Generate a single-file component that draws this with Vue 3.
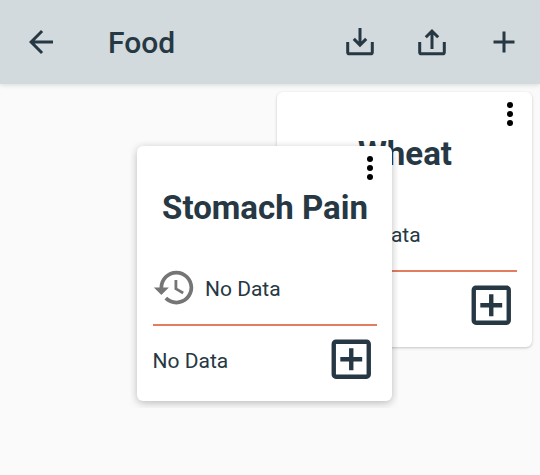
<script setup>
const cards = [
  { name: 'Wheat', place: 'resting', last: 'No Data', average: 'No Data' },
  { name: 'Stomach Pain', place: 'dragged', last: 'No Data', average: 'No Data' },
]
</script>

<template>
  <div class="screen">
    <header class="bar">
      <button class="icon-btn" aria-label="Back">
        <svg viewBox="0 0 24 24"><path d="M20 11H7.83l5.59-5.59L12 4l-8 8 8 8 1.41-1.41L7.83 13H20v-2z" /></svg>
      </button>
      <h1 class="title">Food</h1>
      <nav class="actions">
        <button class="icon-btn" aria-label="Import">
          <svg class="stroked" viewBox="0 0 36 36">
            <path d="M5.7 18v10.2q0 1.6 1.6 1.6h21.4q1.6 0 1.6-1.6V18M18 4v17M11.8 14.9l6.2 6.2 6.2-6.2" />
          </svg>
        </button>
        <button class="icon-btn" aria-label="Export">
          <svg class="stroked" viewBox="0 0 36 36">
            <path d="M5.7 18v10.2q0 1.6 1.6 1.6h21.4q1.6 0 1.6-1.6V18M18 25V7M11.8 13.3 18 7.1l6.2 6.2" />
          </svg>
        </button>
        <button class="icon-btn" aria-label="Add">
          <svg viewBox="0 0 24 24"><path d="M19 13h-6v6h-2v-6H5v-2h6V5h2v6h6v2z" /></svg>
        </button>
      </nav>
    </header>

    <main class="board">
      <article v-for="card in cards" :key="card.name" class="card" :class="card.place">
        <button class="menu" aria-label="Menu">
          <svg viewBox="0 0 24 24">
            <circle cx="12" cy="6" r="2" /><circle cx="12" cy="12" r="2" /><circle cx="12" cy="18" r="2" />
          </svg>
        </button>
        <h2 class="name">{{ card.name }}</h2>
        <div class="last">
          <svg class="history" viewBox="0 0 24 24">
            <path d="M13 3c-4.97 0-9 4.03-9 9H1l3.89 3.89.07.14L9 12H6c0-3.87 3.13-7 7-7s7 3.13 7 7-3.13 7-7 7c-1.93 0-3.68-.79-4.94-2.06l-1.42 1.42C8.27 19.99 10.51 21 13 21c4.97 0 9-4.03 9-9s-4.03-9-9-9zm-1 5v5l4.28 2.54.72-1.21-3.5-2.08V8H12z" />
          </svg>
          <span class="value">{{ card.last }}</span>
        </div>
        <div class="divider"></div>
        <div class="foot">
          <span class="value">{{ card.average }}</span>
          <button class="add" aria-label="Add entry">
            <svg viewBox="0 0 24 24">
              <path d="M19 3H5c-1.11 0-2 .9-2 2v14c0 1.1.89 2 2 2h14c1.1 0 2-.9 2-2V5c0-1.1-.9-2-2-2zm0 16H5V5h14v14zm-8-2h2v-4h4v-2h-4V7h-2v4H7v2h4z" />
            </svg>
          </button>
        </div>
      </article>
    </main>
  </div>
</template>

<style>
body {
  background: #fafafa;
}
</style>

<style scoped>
.screen {
  display: flex;
  flex-direction: column;
  height: 475px;
  overflow: hidden;
  background: #fafafa;
  color: #263843;
  font-family: Roboto, sans-serif;
}
button {
  display: block;
  padding: 0;
  border: 0;
  background: none;
  color: inherit;
}
svg {
  display: block;
  width: 100%;
  height: 100%;
  fill: currentColor;
}
.bar {
  display: flex;
  align-items: center;
  box-sizing: border-box;
  flex: none;
  height: 84px;
  padding: 0 18px 0 23px;
  background: #d2dadd;
  box-shadow: 0 1px 5px rgba(0, 0, 0, 0.14);
}
.icon-btn {
  width: 36px;
  height: 36px;
}
.stroked {
  fill: none;
  stroke: currentColor;
  stroke-width: 3;
}
.title {
  margin: 2px 0 0 49px;
  font-size: 30px;
  line-height: 36px;
  font-weight: 500;
}
.actions {
  display: flex;
  gap: 36px;
  margin-left: auto;
}
.board {
  position: relative;
  flex: 1;
}
.card {
  position: absolute;
  display: flex;
  flex-direction: column;
  box-sizing: border-box;
  width: 255.4px;
  height: 255px;
  padding: 42px 15px 0 15.6px;
  border-radius: 6px;
  background: #fff;
  font-size: 21px;
  line-height: 26px;
}
.resting {
  left: 277px;
  top: 8px;
  box-shadow: 0 1px 3px rgba(0, 0, 0, 0.22);
}
.dragged {
  left: 137px;
  top: 62px;
  box-shadow: 0 2px 8px rgba(0, 0, 0, 0.26);
  clip-path: inset(-5px -5.5px -7px -7px);
}
.menu {
  position: absolute;
  top: 4px;
  right: 4.4px;
  width: 36px;
  height: 36px;
  color: #000;
}
.name {
  margin: 0;
  font-size: 33px;
  line-height: 39px;
  font-weight: 700;
  text-align: center;
  white-space: nowrap;
}
.last {
  display: flex;
  align-items: center;
  gap: 8px;
  height: 45px;
  margin-top: 38px;
}
.value {
  padding-top: 2px;
}
.history {
  flex: none;
  width: 45px;
  height: 45px;
  margin-left: -0.6px;
  color: #757575;
}
.divider {
  flex: none;
  height: 1.5px;
  margin-top: 14px;
  background: #e27d60;
}
.foot {
  display: flex;
  align-items: center;
  justify-content: space-between;
  height: 52.5px;
  margin-top: 7.5px;
}
.foot .value {
  padding-top: 4px;
}
.add {
  width: 52.5px;
  height: 52.5px;
}
</style>
